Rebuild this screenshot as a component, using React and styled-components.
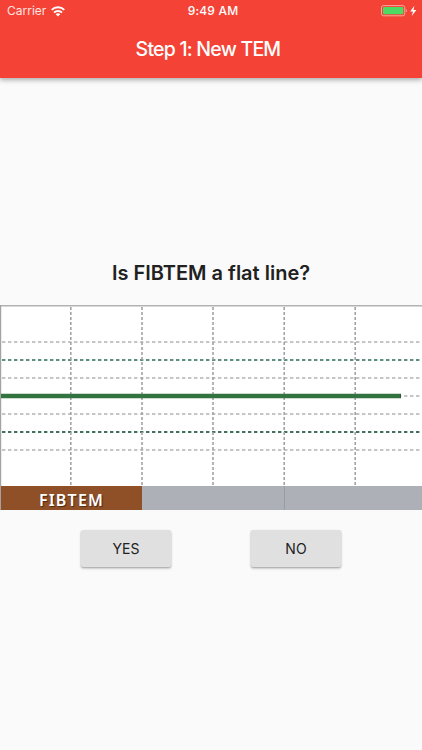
import styled, { createGlobalStyle } from 'styled-components'

const columns = [70.8, 142, 213, 284.2, 355.2]
const rows = [
  { y: 37, color: '#b4b2b4' },
  { y: 55, color: '#5d9083', strong: true },
  { y: 73, color: '#b4b2b4' },
  { y: 91, color: '#b4b2b4' },
  { y: 109, color: '#b4b2b4' },
  { y: 127, color: '#42705a', strong: true },
  { y: 145, color: '#b4b2b4' },
]

function WifiIcon() {
  return (
    <svg width="14" height="11" viewBox="0 0 14 11" fill="none" stroke="#fff" strokeWidth="2">
      <path d="M0.7 3.9C4.2 0.4 9.8 0.4 13.3 3.9" />
      <path d="M3 6.6C5.2 4.5 8.8 4.5 11 6.6" />
      <path d="M7 10.6L4.7 8.2C6 7 8 7 9.3 8.2Z" fill="#fff" stroke="none" />
    </svg>
  )
}

function BatteryIcon() {
  return (
    <svg width="36" height="12" viewBox="0 0 36 12">
      <rect x="0.5" y="0.6" width="23.3" height="10.2" rx="2" fill="none" stroke="#fba69f" />
      <rect x="2" y="2.1" width="20.3" height="7.2" rx="0.8" fill="#4cd964" />
      <path d="M25 4.2C26.3 4.7 26.3 6.7 25 7.2Z" fill="#fba69f" />
      <path d="M33.3 0.7L29.2 6.4H32L30.7 10.9L35.4 5H32.5Z" fill="#fff" />
    </svg>
  )
}

function Chart() {
  return (
    <Plot viewBox="0 0 422 181">
      <rect width="422" height="181" fill="#fff" />
      {rows.map((row) => (
        <line key={row.y} x1="2" x2="422" y1={row.y} y2={row.y} stroke={row.color}
          strokeWidth={row.strong ? 1.8 : 1.5} strokeDasharray="3.4 2.6" />
      ))}
      {columns.map((x) => (
        <line key={x} x1={x} x2={x} y1="2" y2="181" stroke="#a4a2a6" strokeWidth="1.6" strokeDasharray="3 2" />
      ))}
      <path d="M0 0.8H422" stroke="#b3b1b4" strokeWidth="1.6" />
      <path d="M0.6 0V181" stroke="#a4a2a5" strokeWidth="1.2" />
      <path d="M1 91H401" stroke="#32733f" strokeWidth="4.4" />
      <path d="M400.5 89.2V92.8" stroke="#36523e" />
    </Plot>
  )
}

function App() {
  return (
    <Page>
      <GlobalStyle />
      <Header>
        <StatusBar>
          <Carrier>Carrier <WifiIcon /></Carrier>
          <Time>9:49 AM</Time>
          <Battery><BatteryIcon /></Battery>
        </StatusBar>
        <Title>Step 1: New TEM</Title>
      </Header>
      <Content>
        <Question>Is FIBTEM a flat line?</Question>
        <Chart />
        <Legend>
          <Label>FIBTEM</Label>
          <Segment />
          <Segment $divided />
        </Legend>
        <Actions>
          <Button>YES</Button>
          <Button>NO</Button>
        </Actions>
      </Content>
    </Page>
  )
}

export default App

const GlobalStyle = createGlobalStyle`
  * {
    box-sizing: border-box;
  }
  body {
    margin: 0;
    background: #fafafa;
    font-family: Inter, "Liberation Sans", sans-serif;
  }
`
const Page = styled.div`
  height: 750px;
  display: flex;
  flex-direction: column;
  overflow: hidden;
`
const Header = styled.header`
  height: 78px;
  flex: none;
  color: #fff;
  background: #f44336;
  box-shadow: 0 2px 4px rgba(0, 0, 0, 0.22), 0 2px 7px rgba(0, 0, 0, 0.12);
`
const StatusBar = styled.div`
  height: 22px;
  display: grid;
  grid-template-columns: 1fr auto 1fr;
  align-items: center;
  padding: 0 5px 0 7px;
  font-size: 12px;
  line-height: 22px;
`
const Carrier = styled.div`
  display: flex;
  align-items: center;
  gap: 4.5px;
  color: #ffe3e0;
  letter-spacing: 0;
`
const Time = styled.div`
  padding-left: 2px;
  font-weight: 500;
  letter-spacing: 0.2px;
`
const Battery = styled.div`
  display: flex;
  justify-content: flex-end;
`
const Title = styled.h1`
  margin: 0;
  padding-right: 6px;
  font-size: 19.5px;
  font-weight: 500;
  line-height: 55px;
  text-align: center;
  letter-spacing: -0.78px;
`
const Content = styled.main`
  padding-top: 178px;
`
const Question = styled.h2`
  margin: 0;
  height: 49px;
  color: #212121;
  font-size: 20px;
  font-weight: 600;
  line-height: 34px;
  text-align: center;
`
const Plot = styled.svg`
  display: block;
  width: 100%;
  height: 181px;
`
const Legend = styled.div`
  height: 23.5px;
  display: grid;
  grid-template-columns: 141px 142px 1fr;
  grid-template-rows: 100%;
  border-left: 1px solid #a4a2a5;
`
const Label = styled.div`
  color: #fff;
  background: #8f5027;
  font-family: "Noto Sans", "Open Sans", sans-serif;
  font-size: 16px;
  font-weight: 600;
  line-height: 28px;
  text-align: center;
  letter-spacing: 1.2px;
  text-shadow: 1px 1px 1px #4c2a14;
`
const Segment = styled.div`
  background: #adb1b7;
  border-left: ${(props) => (props.$divided ? '1px solid #989ca5' : 'none')};
`
const Actions = styled.div`
  display: flex;
  justify-content: center;
  gap: 80px;
  margin-top: 20.5px;
`
const Button = styled.button`
  width: 90px;
  height: 37px;
  padding: 0;
  border: none;
  border-radius: 2px;
  color: #212121;
  background: #e0e0e0;
  box-shadow: 0 1px 2px rgba(0, 0, 0, 0.28), 0 2px 3px rgba(0, 0, 0, 0.1);
  font-family: inherit;
  font-size: 14px;
  font-weight: 400;
  line-height: 36px;
`
